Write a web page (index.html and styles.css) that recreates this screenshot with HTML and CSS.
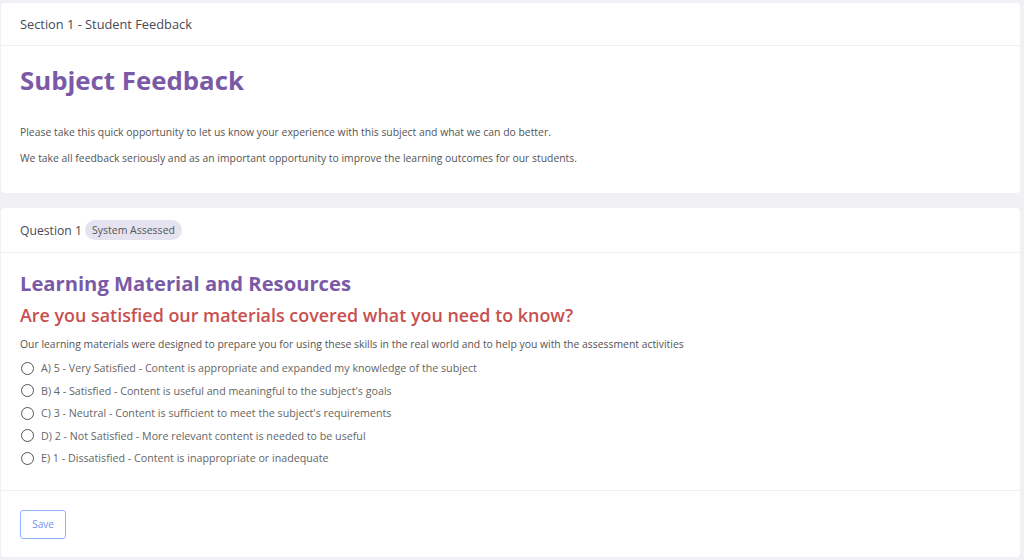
FILE: index.html
```html
<!DOCTYPE html>
<html lang="en">
<head>
    <meta charset="UTF-8">
    <meta name="viewport" content="width=device-width, initial-scale=1.0">
    <title>Subject Feedback</title>
    <link rel="stylesheet" href="styles.css">
</head>
<body>
    <div class="page">
        <div class="card">
            <div class="card-header">Section 1 - Student Feedback</div>
            <div class="card-body intro">
                <h1>Subject Feedback</h1>
                <p>Please take this quick opportunity to let us know your experience with this subject and what we can do better.</p>
                <p>We take all feedback seriously and as an important opportunity to improve the learning outcomes for our students.</p>
            </div>
        </div>

        <div class="card">
            <div class="card-header tall">
                Question 1 <span class="badge">System Assessed</span>
            </div>
            <div class="card-body question">
                <h2>Learning Material and Resources</h2>
                <h3>Are you satisfied our materials covered what you need to know?</h3>
                <p class="hint">Our learning materials were designed to prepare you for using these skills in the real world and to help you with the assessment activities</p>
                <div class="options">
                    <label class="option"><input type="radio" name="q1"> A) 5 - Very Satisfied - Content is appropriate and expanded my knowledge of the subject</label>
                    <label class="option"><input type="radio" name="q1"> B) 4 - Satisfied - Content is useful and meaningful to the subject's goals</label>
                    <label class="option"><input type="radio" name="q1"> C) 3 - Neutral - Content is sufficient to meet the subject's requirements</label>
                    <label class="option"><input type="radio" name="q1"> D) 2 - Not Satisfied - More relevant content is needed to be useful</label>
                    <label class="option"><input type="radio" name="q1"> E) 1 - Dissatisfied - Content is inappropriate or inadequate</label>
                </div>
            </div>
            <div class="card-footer">
                <button type="button" class="btn-save">Save</button>
            </div>
        </div>
    </div>
</body>
</html>
```

FILE: styles.css
```css
body {
    margin: 0;
    background-color: #f0f0f5;
    font-family: "Open Sans", "DejaVu Sans", sans-serif;
    color: #555;
}
.page {
    padding: 3px 4px 0 1px;
    display: flex;
    flex-direction: column;
    gap: 15px;
}
.card {
    background-color: #fff;
    border-radius: 4px;
}
.card-header {
    height: 42px;
    padding: 0 19px;
    display: flex;
    align-items: center;
    gap: 3px;
    font-size: 12.8px;
    color: #4a4a55;
    border-bottom: 1px solid #f1f1f5;
}
.card-header.tall {
    height: 44px;
    font-size: 12.2px;
}
.badge {
    background-color: #e5e3ef;
    color: #555;
    font-size: 10.5px;
    padding: 3px 7px;
    border-radius: 10px;
}
.card-body {
    padding: 0 19px;
}
.intro {
    padding-top: 16px;
    padding-bottom: 22px;
}
h1 {
    margin: 0 0 21px;
    font-size: 25.8px;
    font-weight: 700;
    color: #7a5aa6;
}
.intro p {
    margin: 0;
    font-size: 10.4px;
    line-height: 26px;
    color: #555;
}
.question {
    padding-top: 16px;
    padding-bottom: 20px;
}
h2 {
    margin: 0;
    font-size: 20.2px;
    font-weight: 700;
    color: #7a5aa6;
}
h3 {
    margin: 6px 0 10px;
    font-size: 17.9px;
    font-weight: 600;
    color: #c8504f;
}
.hint {
    margin: 0 0 6px;
    font-size: 10.4px;
    color: #555;
}
.options {
    display: flex;
    flex-direction: column;
}
.option {
    display: flex;
    align-items: center;
    gap: 7px;
    height: 22.5px;
    font-size: 10.7px;
    color: #666;
}
.option input {
    appearance: none;
    width: 13px;
    height: 13px;
    margin: 0 0 0 1px;
    border: 1.5px solid #555;
    border-radius: 50%;
    box-sizing: border-box;
}
.card-footer {
    border-top: 1px solid #f1f1f5;
    padding: 19px 19px 18px;
}
.btn-save {
    background: #fff;
    border: 1px solid #8fb4ff;
    border-radius: 3px;
    color: #6f8ff2;
    font-family: inherit;
    font-size: 10px;
    padding: 0;
    width: 46px;
    height: 29px;
}
```
